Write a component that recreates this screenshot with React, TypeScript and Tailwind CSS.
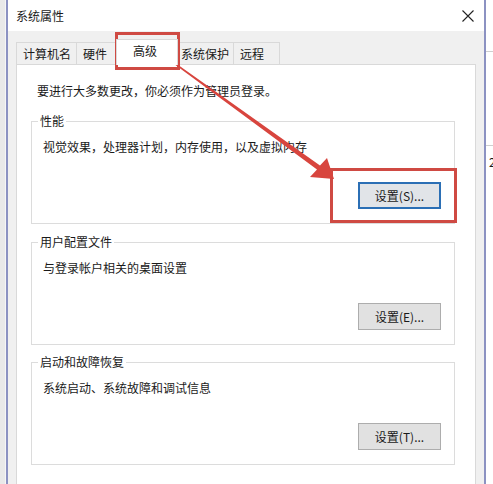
import React from 'react'

const tabs = [
  { label: '计算机名', w: 'w-[61px]', pl: 'pl-[6px]', active: false },
  { label: '硬件', w: 'w-[41px]', pl: 'pl-[6px]', active: false },
  { label: '高级', w: 'w-[62px]', pl: 'pl-[16px]', active: true },
  { label: '系统保护', w: 'w-[57px]', pl: 'pl-[3px]', active: false },
  { label: '远程', w: 'w-[47px]', pl: 'pl-[6px]', active: false },
]

const groups = [
  { title: '性能', desc: '视觉效果，处理器计划，内存使用，以及虚拟内存', button: '设置(S)...', focused: true, mt: 'mt-[14px]' },
  { title: '用户配置文件', desc: '与登录帐户相关的桌面设置', button: '设置(E)...', focused: false, mt: 'mt-[10px]' },
  { title: '启动和故障恢复', desc: '系统启动、系统故障和调试信息', button: '设置(T)...', focused: false, mt: 'mt-[9px]' },
]

const GroupBox: React.FC<{
  title: string
  desc: string
  button: string
  focused: boolean
  mt: string
}> = ({ title, desc, button, focused, mt }) => (
  <fieldset className={`${mt} border border-[#dcdcdc] pl-[11px] pr-[13px] pb-[14px]`}>
    <legend className="-ml-[5px] px-[2px] leading-[16px]">{title}</legend>
    <p className="mt-[10px] leading-[16px]">{desc}</p>
    <div className="mt-[27px] flex justify-end">
      <button
        className={
          focused
            ? 'h-[27px] w-[83px] border-2 border-[#2b6fb5] bg-[#e1e4e8] leading-[16px]'
            : 'h-[27px] w-[83px] border border-[#adadad] bg-[#e1e1e1] leading-[16px]'
        }
      >
        {button}
      </button>
    </div>
  </fieldset>
)

export default function App() {
  return (
    <div className="relative flex h-[484px] w-[493px] overflow-hidden bg-[#e9e9e9] text-[12px] text-[#1a1a1a] font-['Noto_Sans_CJK_SC','Noto_Sans',sans-serif]">
      <div className="w-[6px] shrink-0 border-r border-[#f6f6f6]" />

      {/* dialog */}
      <div className="flex w-[480px] shrink-0 flex-col border-x-2 border-[#8c92c2]">
        <div className="flex h-[31px] shrink-0 items-center justify-between bg-white pl-[8px] pr-[8px]">
          <span className="text-[12px]">系统属性</span>
          <svg width="14" height="14" viewBox="0 0 14 14" className="mr-[1px]">
            <path d="M1.5 1.5 L12.5 12.5 M12.5 1.5 L1.5 12.5" stroke="#222" strokeWidth="1.1" />
          </svg>
        </div>

        <div className="flex min-h-0 flex-1 flex-col bg-[#f0f0f0] px-[8px]">
          <div className="flex h-[33px] shrink-0 items-end">
            {tabs.map((t, i) =>
              t.active ? (
                <div
                  key={t.label}
                  className={`${t.w} ${t.pl} relative z-10 -ml-px -mb-px flex h-[26px] items-center border border-b-0 border-[#d9d9d9] bg-white pb-[3px]`}
                >
                  {t.label}
                </div>
              ) : (
                <div
                  key={t.label}
                  className={`${t.w} ${t.pl} ${i > 0 ? '-ml-px' : ''} flex h-[22px] items-center border border-b-0 border-[#d9d9d9] bg-[#f0f0f0]`}
                >
                  {t.label}
                </div>
              )
            )}
          </div>

          <div className="min-h-0 flex-1 border border-b-0 border-[#d9d9d9] bg-white pl-[14px] pr-[20px] pt-[18px]">
            <p className="ml-[6px] leading-[16px]">要进行大多数更改，你必须作为管理员登录。</p>
            {groups.map((g) => (
              <GroupBox key={g.title} {...g} />
            ))}
          </div>
        </div>
      </div>

      {/* window behind, right edge */}
      <div className="flex min-w-0 flex-1 flex-col overflow-hidden bg-white">
        <div className="h-[51px] shrink-0" />
        <div className="h-[94px] shrink-0 border-t border-[#cfcfcf]" />
        <div className="border-t border-[#cfcfcf] pl-[3px] pt-[8px] leading-[16px]">2</div>
      </div>

      {/* annotations */}
      <div className="absolute left-[115px] top-[32px] h-[38px] w-[65px] border-[3px] border-[#cf4a43]" />
      <div className="absolute left-[330px] top-[168px] h-[55px] w-[127px] border-[3px] border-[#cf4a43]" />
      <svg className="absolute left-0 top-0" width="493" height="484" viewBox="0 0 493 484">
        <polygon
          points="162.6,55.5 163.4,54.5 320,165.5 327,158 334,179 310,177 317,169.5"
          fill="#d8453e"
        />
      </svg>
    </div>
  )
}
